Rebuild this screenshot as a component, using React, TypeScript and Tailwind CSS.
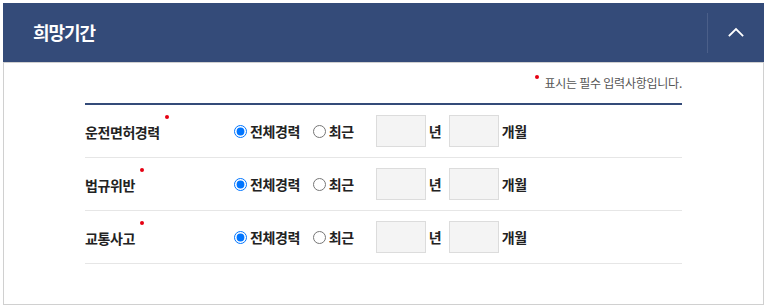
import React from 'react';

const rows = [
  { label: '운전면허경력', name: 'license' },
  { label: '법규위반', name: 'violation' },
  { label: '교통사고', name: 'accident' },
];

function ChevronUp() {
  return (
    <svg width="16" height="10" viewBox="0 0 16 10" fill="none" stroke="white" strokeWidth="1.8" strokeLinecap="square">
      <polyline points="1.5,8.5 8,2 14.5,8.5" />
    </svg>
  );
}

export default function App() {
  return (
    <div className="pl-[3px] pt-[3px] font-['Noto_Sans_CJK_KR','Noto_Sans',sans-serif]">
      <div className="w-[761px]">
        {/* Header */}
        <div className="h-[59px] bg-[#344b79] flex items-center">
          <h2 className="flex-1 pl-[30px] text-white text-[18px] font-bold tracking-[-0.06em] leading-none pb-[1px]">
            희망기간
          </h2>
          <div className="w-px h-[40px] bg-[#4b5f89]" />
          <button className="w-[56px] h-full flex items-center justify-center pb-[2px]">
            <ChevronUp />
          </button>
        </div>

        {/* Body */}
        <div className="border border-[#d0d0d0] h-[243px] px-[81px] pt-[10px]">
          <p className="flex justify-end items-center h-[20px] text-[12px] text-[#555] tracking-[-0.02em] leading-none">
            <span className="w-[4px] h-[4px] rounded-full bg-[#e60012] mr-[5px] mb-[12px]" />
            표시는 필수 입력사항입니다.
          </p>
          <div className="mt-[10px] border-t-2 border-[#344b79]">
            {rows.map((row) => (
              <div key={row.name} className="h-[53px] border-b border-[#e6e6e6] flex items-center">
                <div className="w-[149px] flex items-start">
                  <span className="text-[14px] font-bold text-[#222] tracking-[-0.03em] leading-none pt-[2px]">{row.label}</span>
                  <span className="w-[4px] h-[4px] rounded-full bg-[#e60012] ml-[5px] -mt-[8px]" />
                </div>
                <label className="flex items-center text-[14px] font-bold text-[#222] tracking-[-0.03em] leading-none">
                  <input type="radio" name={row.name} defaultChecked className="w-[13px] h-[13px] m-0 mr-[3px]" />
                  전체경력
                </label>
                <label className="flex items-center ml-[13px] text-[14px] font-bold text-[#222] tracking-[-0.03em] leading-none">
                  <input type="radio" name={row.name} className="w-[13px] h-[13px] m-0 mr-[3px]" />
                  최근
                </label>
                <input type="text" className="ml-[22px] w-[50px] h-[32px] bg-[#f4f4f4] border border-[#dcdcdc]" />
                <span className="ml-[3px] w-[20px] text-[14px] font-bold text-[#222] leading-none">년</span>
                <input type="text" className="w-[50px] h-[32px] bg-[#f4f4f4] border border-[#dcdcdc]" />
                <span className="ml-[3px] text-[14px] font-bold text-[#222] tracking-[-0.03em] leading-none">개월</span>
              </div>
            ))}
          </div>
        </div>
      </div>
    </div>
  );
}
